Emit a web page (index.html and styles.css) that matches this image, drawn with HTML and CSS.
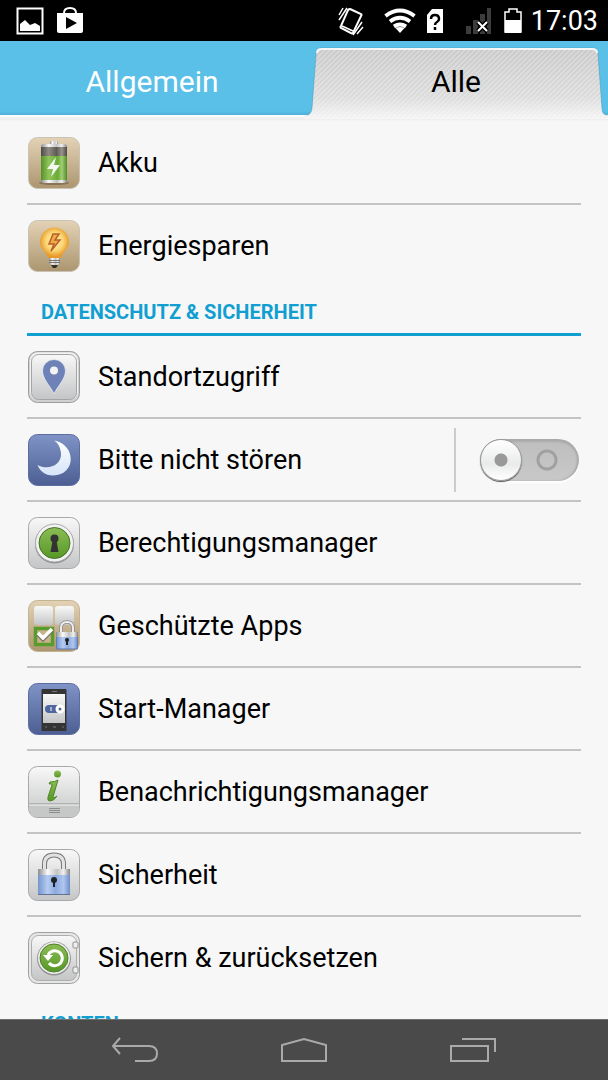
FILE: index.html
```
<!DOCTYPE html>
<html lang="de">
<head>
  <meta charset="UTF-8">
  <title>Einstellungen</title>
  <meta name="viewport" content="width=device-width, initial-scale=1.0">
  <link rel="stylesheet" href="styles.css">
</head>
<body>
  <!-- shared gradients for the icons -->
  <svg class="defs" width="0" height="0" aria-hidden="true">
    <defs>
      <linearGradient id="gSilver" x2="0" y2="1"><stop offset="0" stop-color="#f8f8f8"/><stop offset="1" stop-color="#c4c5c6"/></linearGradient>
      <linearGradient id="gTan" x2="0" y2="1"><stop offset="0" stop-color="#e3d2b5"/><stop offset="1" stop-color="#ac9670"/></linearGradient>
      <linearGradient id="gNavy" x2="0" y2="1"><stop offset="0" stop-color="#7f93c6"/><stop offset="1" stop-color="#4d5f92"/></linearGradient>
      <linearGradient id="gGreen" x2="0" y2="1"><stop offset="0" stop-color="#8cbd55"/><stop offset="1" stop-color="#569827"/></linearGradient>
      <linearGradient id="gCell"><stop offset="0" stop-color="#559128"/><stop offset=".3" stop-color="#91c45c"/><stop offset=".65" stop-color="#69ab36"/><stop offset=".8" stop-color="#a2cf75"/><stop offset="1" stop-color="#4f8b26"/></linearGradient>
      <linearGradient id="gDark"><stop offset="0" stop-color="#4d4b48"/><stop offset=".3" stop-color="#918b82"/><stop offset=".6" stop-color="#5e5a55"/><stop offset=".8" stop-color="#99948c"/><stop offset="1" stop-color="#4a4846"/></linearGradient>
      <linearGradient id="gMetal"><stop offset="0" stop-color="#8c8c8c"/><stop offset=".3" stop-color="#fafafa"/><stop offset=".6" stop-color="#c3c3c3"/><stop offset=".8" stop-color="#f0f0f0"/><stop offset="1" stop-color="#858585"/></linearGradient>
      <linearGradient id="gBlue"><stop offset="0" stop-color="#7595cf"/><stop offset=".3" stop-color="#b5cbf0"/><stop offset=".55" stop-color="#8caae0"/><stop offset=".8" stop-color="#b0c6ee"/><stop offset="1" stop-color="#6e8dc8"/></linearGradient>
      <radialGradient id="gBulb" cy=".45"><stop offset="0" stop-color="#fff3b0"/><stop offset=".6" stop-color="#fbd776"/><stop offset="1" stop-color="#e99a2c"/></radialGradient>
      <linearGradient id="gMoon" x2="0" y2="1"><stop offset="0" stop-color="#ffffff"/><stop offset="1" stop-color="#d5e4f8"/></linearGradient>
      <linearGradient id="gTab" x2="0" y2="1"><stop offset="0" stop-color="#c6c6c6"/><stop offset=".7" stop-color="#dadada"/><stop offset="1" stop-color="#f4f4f4"/></linearGradient>
      <pattern id="stripes" width="5" height="5" patternUnits="userSpaceOnUse"><path d="M-1 6 6-1M-1 1 1-1M4 6 6 4" stroke="#fff" stroke-opacity=".28" stroke-width="2"/></pattern>
    </defs>
  </svg>

  <div class="phone">
    <div class="statusbar">
      <svg width="28" height="28" viewBox="0 0 28 28"><path d="M1.500 1.500h25v25h-25z" fill="none" stroke="#fff" stroke-width="2"/><path d="M4 24v-7l5-4 5 5 5-2 5 3v5z" fill="#fff"/></svg>
      <svg width="28" height="28" viewBox="0 0 28 28"><path d="M8 8V6q0-5 6-5t6 5v2" fill="none" stroke="#fff" stroke-width="2"/><path fill-rule="evenodd" d="M1 6h26v18q0 2-2 2H3q-2 0-2-2zM10 10v12l11-6z" fill="#fff"/></svg>
      <span class="spacer"></span>
      <svg width="28" height="30" viewBox="0 0 28 30" fill="none" stroke="#fff" stroke-width="2"><path d="m13 3 11 5q1 1 0 2l-8 17q-1 1-2 0L4 22q-1-1 0-2l7-16q1-1 2-1z"/><path d="m5 20 11 5M2 9l4-7M2 14l8-12M20 28l6-7M16 29l9-13" stroke-width="1.500"/></svg>
      <svg class="wifi" width="34" height="26" viewBox="0 0 34 26" fill="none" stroke="#fff" stroke-width="4"><path d="M2.500 8Q17-3 31.500 8M7 13.500Q17 6 27 13.500M11 18.500q6-4 12 0"/><path d="M12.500 20q4.500-2 9 0L17 25z" fill="#fff" stroke="none"/></svg>
      <svg class="sim" width="18" height="26" viewBox="0 0 18 26"><path d="M6 1h11v24H1V7z" fill="#fff"/><path d="M5 11q0-4 4-4t4 4q0 2-2 3t-2 3M9 19v3" fill="none" stroke="#000" stroke-width="2.500"/></svg>
      <svg class="signal" width="26" height="26" viewBox="0 0 26 26"><path d="M0 18h5v8H0zM7 12h5v14H7zM14 6h5v20h-5zM21 0h4v26h-4z" fill="#3c3c3c"/><path d="m12 14 9 9m0-9-9 9" stroke="#000" stroke-width="5"/><path d="m12 14 9 9m0-9-9 9" stroke="#fff" stroke-width="2"/></svg>
      <svg class="battery" width="18" height="26" viewBox="0 0 18 26"><path d="M1 24V4h4V1h8v3h4v20z" fill="#000" stroke="#fff" stroke-width="1.500"/><path d="M1 12h16v13H1z" fill="#fff"/></svg>
      <time>17:03</time>
    </div>

    <div class="tabs" role="tablist">
      <button class="tab" role="tab">Allgemein</button>
      <button class="tab active" role="tab" aria-selected="true">
        <svg viewBox="0 0 304 80" preserveAspectRatio="none" aria-hidden="true">
          <path d="M0 74h3q4 0 5-7l4-54q0-6 6-6h270q6 0 6 6l4 54q0 7 5 7h1v4H0z" fill="url(#gTab)"/>
          <path d="M0 74h3q4 0 5-7l4-54q0-6 6-6h270q6 0 6 6l4 54q0 7 5 7h1v4H0z" fill="url(#stripes)"/>
          <path d="M3 74q4 0 5-7l4-54q0-6 6-6h270q6 0 6 6l4 54q0 7 5 7" fill="none" stroke="#3d93b8" stroke-opacity=".5"/>
          <path d="M13 12q0-4 5-4h270q5 0 5 4" fill="none" stroke="#f6f6f6" stroke-width="2"/>
        </svg>
        <span>Alle</span>
      </button>
    </div>

    <main>
      <ul class="list">
        <li class="row"><a href="#akku">
          <svg class="icon" viewBox="0 0 52 52"><rect x=".5" y=".5" width="51" height="51" rx="9" fill="url(#gTan)" stroke="#c9c2b5"/><ellipse cx="26" cy="46" rx="15" ry="2" fill="#6c5a3c" opacity=".6"/><rect x="22" y="4" width="8" height="4" rx="1" fill="url(#gMetal)"/><path d="M13 9h26v11H13z" fill="url(#gDark)"/><path d="M13 19h26v26H13z" fill="url(#gCell)"/><path d="M13 10q0-3 3-3h20q3 0 3 3zM13 43h26v1q0 2-2 2H15q-2 0-2-2z" fill="url(#gMetal)"/><path d="m28 20-9 12h6l-2 8 9-12h-6z" fill="#f4f7ef"/></svg>
          Akku</a></li>
        <li class="row"><a href="#energie">
          <svg class="icon" viewBox="0 0 52 52"><rect x=".5" y=".5" width="51" height="51" rx="9" fill="url(#gTan)" stroke="#c9c2b5"/><path d="M12 22a14.500 14.500 0 0 1 29 0c0 7-6 9-8 16H20c-2-7-8-9-8-16z" fill="url(#gBulb)"/><path d="M21 38h11v6q-5 2-11 0z" fill="url(#gMetal)"/><path d="M21 40.500h11M21 42.500h11" stroke="#78736b"/><path d="M23 45h7l-2 3h-3z" fill="#35312c"/><path d="m25 14-4 10h5l-3 7 9-11h-5l4-6z" fill="#f3ab4a" stroke="#b9602a" stroke-width="1.500"/></svg>
          Energiesparen</a></li>
      </ul>

      <h2>Datenschutz &amp; Sicherheit</h2>
      <ul class="list">
        <li class="row"><a href="#standort">
          <svg class="icon" viewBox="0 0 52 52"><rect x=".5" y=".5" width="51" height="51" rx="9" fill="#d0d1d2" stroke="#9c9c9c"/><rect x="2" y="1.500" width="48" height="47" rx="8" fill="#f3f3f3"/><rect x="3.500" y="3.500" width="45" height="45" rx="7" fill="url(#gSilver)" stroke="#a4a4a4"/><path d="M26 43C23 36 14.500 28 14.500 20a11.500 11.500 0 0 1 23 0C37.500 28 29 36 26 43z" fill="#6e82b8" stroke="#fff" stroke-opacity=".6"/><circle cx="26" cy="19.500" r="4" fill="#f3f3f3"/></svg>
          Standortzugriff</a></li>
        <li class="row">
          <a href="#stoeren">
          <svg class="icon" viewBox="0 0 52 52"><rect x=".5" y=".5" width="51" height="51" rx="9" fill="url(#gNavy)" stroke="#5d6da0"/><path d="M26 6.500C48 10 49 41 25 41.500 17 41.500 12 37 9.500 31 20 37 34 31 33 19 32 12 30 9 26 6.500z" fill="url(#gMoon)"/></svg>
          Bitte nicht stören</a>
          <div class="toggle"><input type="checkbox" aria-label="Bitte nicht stören"></div>
        </li>
        <li class="row"><a href="#berechtigung">
          <svg class="icon" viewBox="0 0 52 52"><rect x=".5" y=".5" width="51" height="51" rx="9" fill="url(#gSilver)" stroke="#a9a9a9"/><circle cx="26.500" cy="27" r="19.500" fill="#8d8d8d"/><circle cx="26.500" cy="26" r="19" fill="#f2f2f2" stroke="#aaa"/><circle cx="26.500" cy="26" r="15.500" fill="url(#gGreen)" stroke="#47702a"/><path d="M24.500 24h4l2 11h-8z" fill="#333"/><circle cx="26.500" cy="21.500" r="4" fill="#333"/></svg>
          Berechtigungsmanager</a></li>
        <li class="row"><a href="#geschuetzt">
          <svg class="icon" viewBox="0 0 52 52"><rect x=".5" y=".5" width="51" height="51" rx="9" fill="url(#gTan)" stroke="#c2b393"/><rect x="6" y="6" width="19" height="19" rx="3" fill="url(#gSilver)"/><rect x="27" y="6" width="19" height="19" rx="3" fill="url(#gSilver)"/><rect x="7.500" y="28.500" width="17" height="16" fill="#c6b28c" stroke="#589c2d" stroke-width="3.500"/><path d="m10 34 5 5 9-9" fill="none" stroke="#77705f" stroke-width="4.500"/><path d="m10 33 5 5 9-9" fill="none" stroke="#fff" stroke-width="3.500"/><path d="M33 33v-5q0-6 6-6t6 6v5" fill="none" stroke="#8a8a8a" stroke-width="3.500"/><path d="M33 33v-5q0-6 6-6t6 6v5" fill="none" stroke="#eee" stroke-width="2"/><path d="M28.500 36h21v13h-21z" fill="url(#gBlue)" stroke="#627bb0"/><path d="M28 32h22v5H28z" fill="url(#gMetal)"/><circle cx="39" cy="40" r="2" fill="#222"/><path d="M38 40h2v5h-2z" fill="#222"/></svg>
          Geschützte Apps</a></li>
        <li class="row"><a href="#start">
          <svg class="icon" viewBox="0 0 52 52"><rect x=".5" y=".5" width="51" height="51" rx="9" fill="url(#gNavy)" stroke="#5d6da0"/><rect x="13.500" y="6" width="25" height="42" rx="1" fill="#343434"/><path d="M15 11h22v29H15z" fill="url(#gSilver)"/><path d="M17 44h2m6 0h3m6 0h2M24 8.500h5" stroke="#777"/><rect x="17" y="22" width="18" height="8" rx="4" fill="#4f66a1"/><path d="M23 24v4" stroke="#fff"/><circle cx="32" cy="26" r="3" fill="#53669a" stroke="#fff" stroke-width="3"/></svg>
          Start-Manager</a></li>
        <li class="row"><a href="#benachrichtigung">
          <svg class="icon" viewBox="0 0 52 52"><rect x=".5" y=".5" width="51" height="51" rx="9" fill="url(#gSilver)" stroke="#a9a9a9"/><path d="M1 38.500h50V42q0 9-9 9H10q-9 0-9-9z" fill="#c6c8c7"/><path d="M1 38h50" stroke="#8e9290"/><path d="M1 39h50" stroke="#f5f5f5"/><path d="M21 42.500h11M21 44.500h11M21 46.500h11" stroke="#8a8d8b"/><circle cx="29.500" cy="8" r="3.500" fill="url(#gGreen)"/><path d="M22 16q5 0 8-2l-5 17q0 2 4-1-3 5-7 5-3 0-2-4l4-12q0-2-3-1z" fill="url(#gGreen)" stroke="#4f8827"/></svg>
          Benachrichtigungsmanager</a></li>
        <li class="row"><a href="#sicherheit">
          <svg class="icon" viewBox="0 0 52 52"><rect x=".5" y=".5" width="51" height="51" rx="9" fill="url(#gSilver)" stroke="#a9a9a9"/><path d="M16.500 22v-7q0-9 9.500-9t9.500 9v7" fill="none" stroke="#777" stroke-width="5"/><path d="M16.500 22v-7q0-9 9.500-9t9.500 9v7" fill="none" stroke="#e2e2e2" stroke-width="3"/><path d="M10 26h32v19H10z" fill="url(#gBlue)"/><path d="M10 20h32v6H10z" fill="url(#gMetal)"/><path d="M10 45.500h32" stroke="#637090"/><circle cx="26" cy="31" r="3" fill="#1e2228"/><path d="M25 32h2v6h-2z" fill="#1e2228"/></svg>
          Sicherheit</a></li>
        <li class="row"><a href="#sichern">
          <svg class="icon" viewBox="0 0 52 52"><rect x=".5" y=".5" width="51" height="51" rx="9" fill="#e6e6e6" stroke="#a0a0a0"/><rect x="3.500" y="3.500" width="45" height="45" rx="7" fill="url(#gSilver)" stroke="#adadad"/><circle cx="26" cy="26.500" r="17" fill="#939393"/><circle cx="26" cy="26" r="16" fill="#ececec"/><circle cx="26" cy="26" r="14" fill="url(#gGreen)" stroke="#4e8129"/><path d="M20 23a7.500 7.500 0 1 1 1 8" fill="none" stroke="#fff" stroke-width="3"/><path d="m15 23 10 0-5 6z" fill="#fff"/><g fill="#eee" stroke="#929292"><rect x="45" y="10" width="5" height="6" rx="1"/><rect x="45" y="35" width="5" height="6" rx="1"/></g></svg>
          Sichern &amp; zurücksetzen</a></li>
      </ul>

      <h2>Konten</h2>
    </main>

    <nav class="navbar">
      <button aria-label="Zurück"><svg width="48" height="26" viewBox="0 0 48 26"><path d="M3 9h35q8 0 8 7.500T38 24H24M9 1 2 9l7 8"/></svg></button>
      <button aria-label="Start"><svg width="48" height="26" viewBox="0 0 48 26"><path d="M2 24V8l22-6 22 6v16z"/></svg></button>
      <button aria-label="Letzte Apps"><svg width="48" height="26" viewBox="0 0 48 26"><path d="M2 9h37v15H2zM13 2h33v13"/></svg></button>
    </nav>
  </div>
</body>
</html>
```
FILE: styles.css
```
* {
  box-sizing: border-box;
}
body {
  margin: 0;
  font-family: Roboto, sans-serif;
  background: #f7f7f7;
  color: #000;
}
button {
  border: none;
  background: none;
  padding: 0;
  font-family: inherit;
  cursor: pointer;
}
.defs {
  position: absolute;
}
.phone {
  display: flex;
  flex-direction: column;
  height: 100vh;
  overflow: hidden;
}

/* status bar */
.statusbar {
  display: flex;
  align-items: center;
  flex-shrink: 0;
  gap: 12px;
  height: 41px;
  padding: 0 10px 0 16px;
  background: #000;
  color: #fff;
}
.spacer {
  flex: 1;
}
.wifi {
  margin-left: 6px;
}
.sim {
  margin-left: -3px;
}
.signal {
  margin-left: 10px;
}
.statusbar time {
  margin-left: -3px;
  font-size: 27px;
}

/* tabs */
.tabs {
  display: flex;
  flex-shrink: 0;
  height: 80px;
  background: linear-gradient(#5bc0e8 70px, #4baed6 74px, #fff 74px, #ececec 78px, #f7f7f7);
}
.tab {
  position: relative;
  flex: 1;
  color: #fff;
  font-size: 30px;
}
.tab.active {
  color: #000;
}
.tab svg {
  position: absolute;
  inset: 0;
  width: 100%;
  height: 100%;
}
.tab span {
  position: relative;
}

/* settings list */
main {
  flex: 1;
  min-height: 0;
  overflow: hidden;
  padding: 1px 27px 0;
}
.list {
  list-style: none;
  margin: 0;
  padding: 0;
}
.row {
  display: flex;
  align-items: center;
  height: 83px;
  border-bottom: 2px solid #c4c4c4;
}
.row:last-child {
  border-bottom-color: transparent;
}
.row a {
  display: flex;
  flex: 1;
  align-items: center;
  gap: 18px;
  padding-left: 1px;
  color: #000;
  font-size: 27px;
  text-decoration: none;
}
.icon {
  width: 52px;
  height: 52px;
}
h2 {
  height: 48px;
  margin: 0;
  padding-left: 14px;
  border-bottom: 3px solid #119fd2;
  color: #119fd2;
  font-size: 20px;
  font-weight: 700;
  line-height: 48px;
  text-transform: uppercase;
}

/* on/off switch */
.toggle {
  display: flex;
  align-items: center;
  height: 64px;
  padding: 0 2px 0 24px;
  border-left: 2px solid #ccc;
}
.toggle input {
  appearance: none;
  display: flex;
  align-items: center;
  width: 99px;
  height: 42px;
  margin: 0;
  border-radius: 21px;
  background:
    radial-gradient(circle at 67px 21px, transparent 7px, #a0a0a0 8px, #a0a0a0 10px, transparent 11px),
    linear-gradient(#bebebe, #c8c8c8);
  box-shadow: inset 0 3px 2px #aaa, inset -2px 0 2px #aaa, 0 2px 2px #fff;
}
.toggle input::before {
  content: "";
  width: 40px;
  height: 40px;
  border: 1px solid #999;
  border-radius: 50%;
  background: radial-gradient(circle, #999 6px, transparent 7px), linear-gradient(#fff, #e9ebea 60%, #fff);
  box-shadow: 0 1px 1px #555;
}
.toggle input:checked::before {
  margin-left: 59px;
}

/* bottom navigation */
.navbar {
  display: flex;
  justify-content: center;
  flex-shrink: 0;
  height: 61px;
  border-top: 1px solid #6c706f;
  background: #4a4a4b;
}
.navbar button {
  flex: 0 1 169px;
  display: flex;
  align-items: center;
  justify-content: center;
}
.navbar svg {
  fill: none;
  stroke: #aaa;
  stroke-width: 2;
}
```
